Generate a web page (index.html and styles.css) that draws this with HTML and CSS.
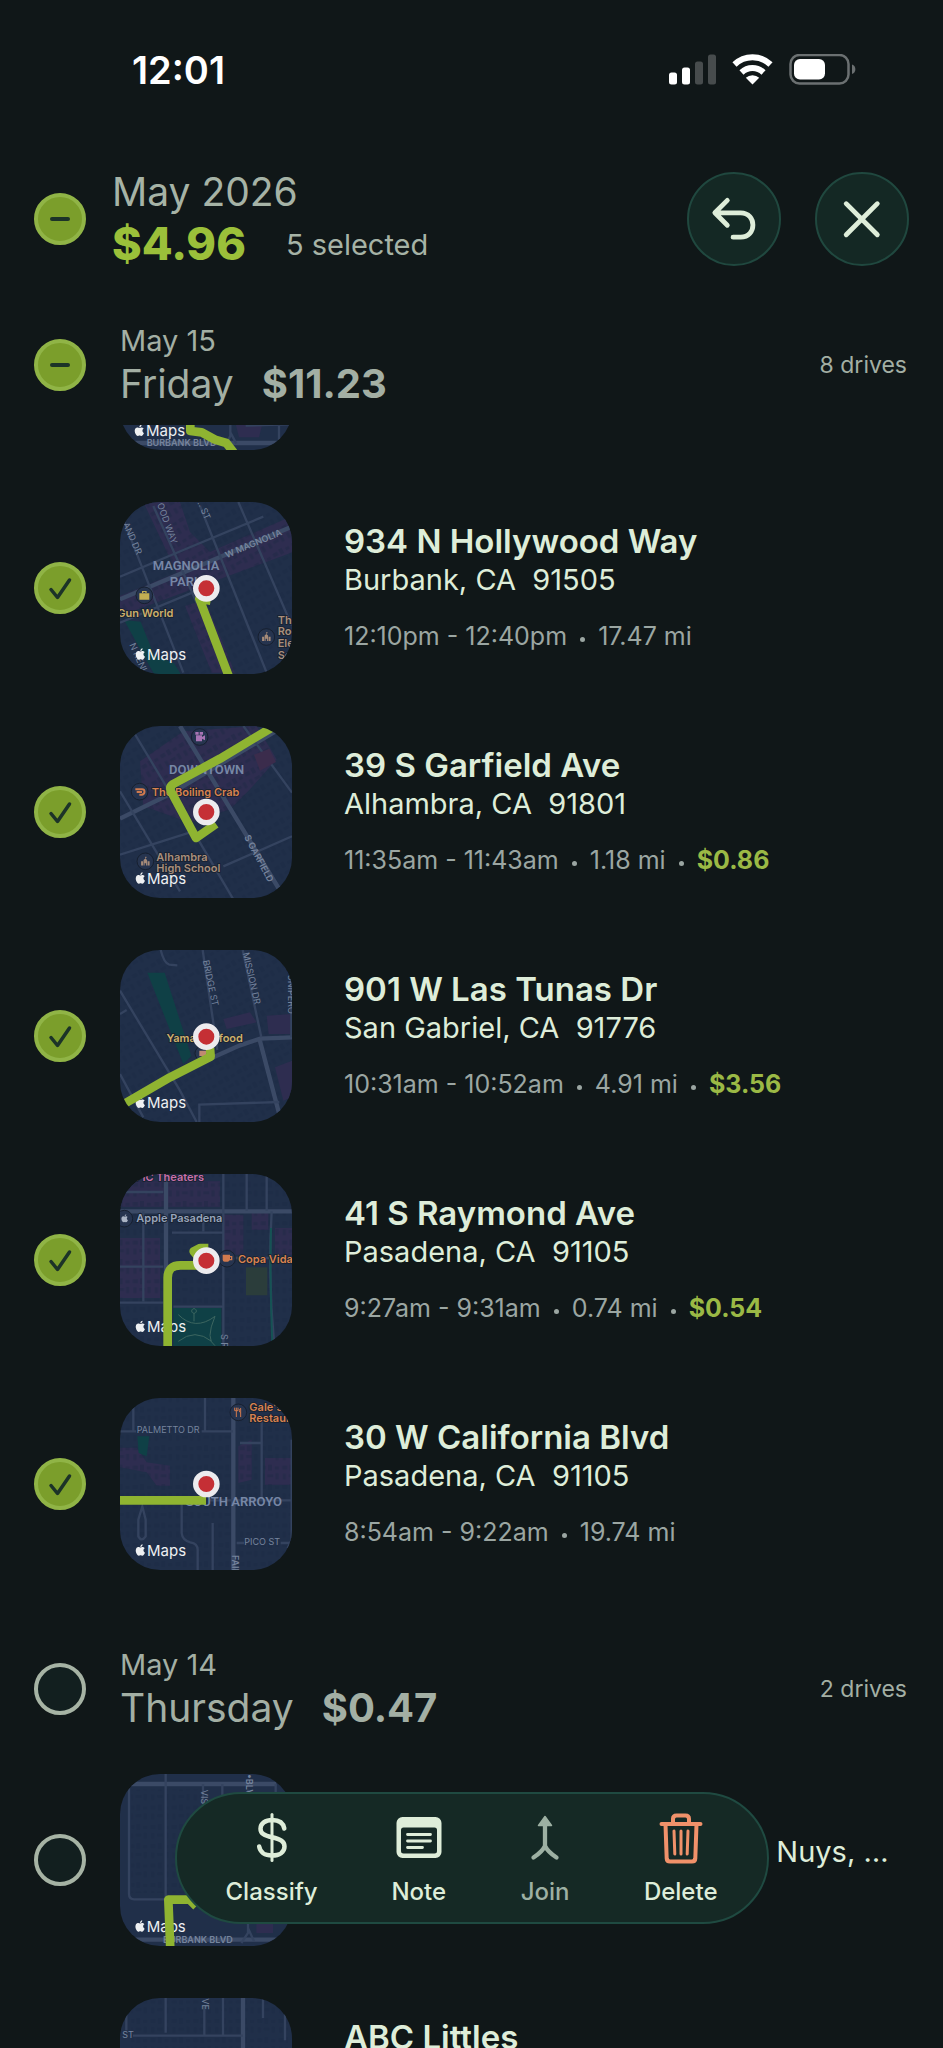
FILE: index.html
```html
<!DOCTYPE html>
<html lang="en">
<head>
<meta charset="utf-8">
<meta name="viewport" content="width=device-width, initial-scale=1">
<title>Drives</title>
<link rel="stylesheet" href="styles.css">
</head>
<body>
<svg class="defs" width="0" height="0" aria-hidden="true">
  <defs>
    <pattern id="blocks" width="64" height="58" patternUnits="userSpaceOnUse">
      <path class="bld" d="M4 6h16v12H4zM26 3h12v18H26zM46 8h13v10H46zM6 30h10v18H6zM24 32h18v9H24zM48 28h10v20H48z"/>
    </pattern>
    <pattern id="blocks-tilt" width="64" height="58" patternUnits="userSpaceOnUse" patternTransform="rotate(-30)">
      <path class="bld" d="M4 6h16v12H4zM26 3h12v18H26zM46 8h13v10H46zM6 30h10v18H6zM24 32h18v9H24zM48 28h10v20H48z"/>
    </pattern>
    <symbol id="apple" viewBox="0 0 24 24"><path d="M12.152 6.896c-.948 0-2.415-1.078-3.96-1.04-2.04.027-3.91 1.183-4.961 3.014-2.117 3.675-.546 9.103 1.519 12.09 1.013 1.454 2.208 3.09 3.792 3.039 1.52-.065 2.09-.987 3.935-.987 1.831 0 2.35.987 3.96.948 1.637-.026 2.676-1.48 3.676-2.948 1.156-1.688 1.636-3.325 1.662-3.415-.039-.013-3.182-1.221-3.22-4.857-.026-3.04 2.48-4.494 2.597-4.559-1.429-2.09-3.623-2.324-4.39-2.376-2-.156-3.675 1.09-4.61 1.09zM15.53 3.83c.843-1.012 1.4-2.427 1.245-3.83-1.207.052-2.662.805-3.532 1.818-.78.896-1.454 2.338-1.273 3.714 1.338.104 2.715-.688 3.559-1.701"/></symbol>
    <symbol id="school" viewBox="0 0 40 40"><path d="M3 37V20h8v17zM29 37V20h8v17zM13 37V15l7-6 7 6v22h-4v-9h-6v9zM19 2h6v4h-4v4h-2z"/></symbol>
    <symbol id="tick" viewBox="0 0 52 52"><path d="M17 27.500l6.500 8L35.500 18" fill="none" stroke="currentColor" stroke-width="3.500" stroke-linecap="round" stroke-linejoin="round"/></symbol>
    <symbol id="dash" viewBox="0 0 52 52"><path d="M18 26h16" fill="none" stroke="currentColor" stroke-width="4" stroke-linecap="round"/></symbol>
  </defs>
</svg>

<div class="app">
  <div class="status">
    <span class="clock">12:01</span>
    <svg class="status-icons" viewBox="0 0 188 32" width="188" height="32" aria-hidden="true">
      <g fill="#fff"><rect x="0" y="18.500" width="8" height="12" rx="2.500"/><rect x="13" y="13.500" width="8" height="17" rx="2.500"/></g>
      <g fill="#474c4d"><rect x="26" y="7.500" width="8" height="23" rx="2.500"/><rect x="39" y="0.500" width="8" height="30" rx="2.500"/></g>
      <g fill="none" stroke="#fff" stroke-width="6"><path d="M65.500 10.500a26 26 0 0 1 36 0"/><path d="M72.500 18.500a16 16 0 0 1 22 0"/></g>
      <path fill="#fff" d="M76.800 23.800a10 10 0 0 1 13.400 0l-6.700 6.700z"/>
      <rect x="121.500" y="1" width="58" height="28.500" rx="9" fill="none" stroke="#6b7071" stroke-width="2.500"/>
      <rect x="125" y="5" width="31" height="20.500" rx="6" fill="#fff"/>
      <path fill="#6b7071" d="M183 10.500c4.500 1 4.500 8.500 0 9.500z"/>
    </svg>
  </div>

  <header class="top">
    <label class="check"><input type="checkbox" checked aria-label="Select all drives in May 2026"><svg aria-hidden="true"><use href="#dash"/></svg></label>
    <div class="period">
      <h1 class="month">May 2026</h1>
      <p class="summary"><strong class="total">$4.96</strong><span class="count">5 selected</span></p>
    </div>
    <div class="actions">
      <button class="round" type="button" aria-label="Undo"><svg viewBox="0 0 94 94" fill="none" stroke="currentColor" stroke-width="5" stroke-linecap="round" stroke-linejoin="round"><path d="M40 27.500L27 40.500l13 13M28 40.500h26c17 0 17 25.500 0 25.500h-8"/></svg></button>
      <button class="round" type="button" aria-label="Close"><svg viewBox="0 0 94 94" fill="none" stroke="currentColor" stroke-width="5" stroke-linecap="round"><path d="M30.500 31l32.500 32.500M63 31L30.500 63.500"/></svg></button>
    </div>
  </header>

  <section class="day">
    <label class="check"><input type="checkbox" checked aria-label="Select drives on May 15"><svg aria-hidden="true"><use href="#dash"/></svg></label>
    <div class="day-text">
      <p class="date">May 15</p>
      <h2 class="weekday">Friday <strong>$11.23</strong></h2>
    </div>
    <span class="drives">8 drives</span>
  </section>

  <main class="scroll">
    <ul class="list list-cut">
      <li class="drive">
        <svg class="map" viewBox="363 -33 516 516" aria-hidden="true">
          <rect class="land" x="363" y="-33" width="516" height="516"/>
          <path class="zone" d="M710 405h80l-10 40h-60z"/>
          <path class="road wide" d="M363 462h516"/>
          <path class="road" d="M694 380v60l-14 30M694 430l18 34M840 380v80M740 410l130-4"/>
          <g class="brand"><use href="#apple" x="404" y="405" width="34" height="38"/><text x="441" y="442">Maps</text></g>
          <text class="street strong" x="443" y="471">BURBANK BLVD</text>
          <path class="route" d="M574 380v46l34 4 40 22 34 10 22 28"/>
        </svg>
      </li>

      <li class="drive">
        <label class="check"><input type="checkbox" checked aria-label="Select 934 N Hollywood Way"><svg aria-hidden="true"><use href="#tick"/></svg></label>
        <svg class="map" viewBox="30 38 516 516" aria-hidden="true">
          <rect class="land" x="30" y="38" width="516" height="516"/>
          <path class="zone" d="M100 38h110l30 90 60 60 250-110v110L30 380v-60l170-70zM225 350l60-20 90 220h-70z"/>
          <rect fill="url(#blocks-tilt)" x="30" y="38" width="516" height="516"/>
          <path class="park" d="M42 392l50 5 40 100 60 25 20 32h-80z"/>
          <path class="road wide" d="M30 330l520-220"/>
          <path class="road" d="M30 262l190-80 240-100M270 50l200 500M385 38l160 370M130 50l130 290M40 90l180 460M30 480l30 74M30 400l240-100"/>
          <g class="street"><text transform="translate(141 45) rotate(70)">OOD WAY</text><text transform="translate(262 40) rotate(66)">.. ST</text><text transform="translate(38 104) rotate(66)">AND DR</text><text transform="translate(58 466) rotate(66)">N KENI</text><text class="strong" transform="translate(350 207) rotate(-23)">W MAGNOLIA</text></g>
          <text class="place" x="228" y="243" text-anchor="middle">MAGNOLIA</text><text class="place" x="228" y="290" text-anchor="middle">PARK</text>
          <circle class="poi-bg" cx="103" cy="318" r="25"/><path fill="#c3ae52" d="M88 312h30v19H88zM96 311v-6h14v6h-4v-3h-6v3z"/>
          <text class="poi gold" x="22" y="383">Gun World</text>
          <circle class="poi-bg" cx="469" cy="443" r="25"/><use href="#school" x="453" y="427" width="32" height="30" fill="#a58a78"/>
          <g class="poi tan"><text x="503" y="403">The</text><text x="503" y="438">Roos</text><text x="503" y="473">Elem</text><text x="503" y="508">Sch</text></g>
          <g class="brand"><use href="#apple" x="74" y="474" width="34" height="40"/><text x="111" y="512">Maps</text></g>
          <path class="route" d="M302 334l-34-6 88 232"/>
          <circle class="pin" cx="289" cy="297" r="32"/>
        </svg>
        <div class="info">
          <h3 class="title">934 N Hollywood Way</h3>
          <p class="city">Burbank, CA&nbsp; 91505</p>
          <p class="meta">12:10pm - 12:40pm <i></i> 17.47 mi</p>
        </div>
      </li>

      <li class="drive">
        <label class="check"><input type="checkbox" checked aria-label="Select 39 S Garfield Ave"><svg aria-hidden="true"><use href="#tick"/></svg></label>
        <svg class="map" viewBox="30 34 516 516" aria-hidden="true">
          <rect class="land" x="30" y="34" width="516" height="516"/>
          <path class="zone" d="M90 140l130-90 220-16 60 100-80 90-60 60-120 40-140-50z"/>
          <rect fill="url(#blocks-tilt)" x="30" y="34" width="516" height="516"/>
          <path class="road wide" d="M30 312l150-74 320-190M210 34l310 510"/>
          <path class="road" d="M60 34l210 350 100 170M30 230l180 300M400 34l146 200M340 455l206-90M30 420l220-70"/>
          <path fill="#3b2c4c" d="M432 120l46-18 20 40-48 26z"/>
          <text class="place" x="290" y="179" text-anchor="middle">DOWNTOWN</text>
          <g class="street"><text class="strong" transform="translate(402 367) rotate(62)">S GARFIELD</text></g>
          <circle class="poi-bg" cx="269" cy="67" r="25"/><path fill="#a874b4" d="M258 62h18v5l9-5v15l-9-5v8h-18zM256 52h10v8h-10zM269 52h10v8h-10z"/>
          <circle class="poi-bg" cx="89" cy="231" r="25"/><path fill="none" stroke="#d07a4e" stroke-width="6" d="M76 224h20c10 0 10 14 0 16h-8M80 232h16"/>
          <text class="poi orange" x="125" y="245">The Boiling Crab</text>
          <circle class="poi-bg" cx="106" cy="440" r="25"/><use href="#school" x="90" y="425" width="32" height="30" fill="#a58a78"/>
          <g class="poi tan"><text x="139" y="438">Alhambra</text><text x="139" y="473">High School</text></g>
          <g class="brand"><use href="#apple" x="74" y="470" width="34" height="40"/><text x="111" y="508">Maps</text></g>
          <path class="route" d="M500 30L330 132 190 208q-14 9-6 24l74 138 60-42"/>
          <circle class="pin" cx="289" cy="292" r="32"/>
        </svg>
        <div class="info">
          <h3 class="title">39 S Garfield Ave</h3>
          <p class="city">Alhambra, CA&nbsp; 91801</p>
          <p class="meta">11:35am - 11:43am <i></i> 1.18 mi <i></i> <b>$0.86</b></p>
        </div>
      </li>

      <li class="drive">
        <label class="check"><input type="checkbox" checked aria-label="Select 901 W Las Tunas Dr"><svg aria-hidden="true"><use href="#tick"/></svg></label>
        <svg class="map" viewBox="30 28 516 516" aria-hidden="true">
          <rect class="land" x="30" y="28" width="516" height="516"/>
          <rect fill="url(#blocks-tilt)" x="30" y="28" width="516" height="516"/>
          <path class="zone" d="M340 235l80-20 20 30-90 20zM470 225l76-5v60h-70zM495 380l51-20v110l-26 10z"/>
          <path class="park" d="M112 96h52l80 250-24 24z"/>
          <path class="road wide" d="M300 354l90-40 60-20 96-4M448 294l66 250"/>
          <path class="road" d="M278 28l44 300M398 28l56 262M544 100v190M152 28q10 40 26 44l24 2M30 150l180 300 50 94M30 400l70 130M30 220l20-12M268 544v-52l240-8"/>
          <g class="street"><text transform="translate(278 60) rotate(78)">BRIDGE ST</text><text transform="translate(398 38) rotate(77)">MISSION DR</text><text transform="translate(535 85) rotate(90)">JUNIPERO</text></g>
          <text class="poi gold" x="284" y="304" text-anchor="middle">Yama Seafood</text>
          <circle class="poi-bg" cx="277" cy="338" r="22"/><path fill="#c08a72" d="M268 330h20v16h-20z"/>
          <g class="brand"><use href="#apple" x="74" y="465" width="34" height="40"/><text x="111" y="503">Maps</text></g>
          <path class="route" d="M42 490l138-80 122-62-2-26"/>
          <circle class="pin" cx="289" cy="288" r="32"/>
        </svg>
        <div class="info">
          <h3 class="title">901 W Las Tunas Dr</h3>
          <p class="city">San Gabriel, CA&nbsp; 91776</p>
          <p class="meta">10:31am - 10:52am <i></i> 4.91 mi <i></i> <b>$3.56</b></p>
        </div>
      </li>

      <li class="drive">
        <label class="check"><input type="checkbox" checked aria-label="Select 41 S Raymond Ave"><svg aria-hidden="true"><use href="#tick"/></svg></label>
        <svg class="map" viewBox="30 38 516 516" aria-hidden="true">
          <rect class="land" x="30" y="38" width="516" height="516"/>
          <path class="zone" d="M30 60h300v76H30zM30 230h120v180H30zM340 160h60v120h-60zM425 155h50v50h-50zM495 200h51v80h-51z"/>
          <rect fill="url(#blocks)" x="30" y="38" width="516" height="516"/>
          <path fill="#2b3d3b" d="M408 318h64v84h-64z"/>
          <path class="park" d="M190 440h144v114H190z"/>
          <path d="M205 460q50 50 110 5-30 70 0 88M205 540q50-40 100 0M252 480v-24a7 7 0 1 1 .1 0" fill="none" stroke="#3d6660" stroke-width="3"/>
          <path class="road wide" d="M30 150h516M168 38v516"/>
          <path class="road" d="M340 38v516M485 150q-12 200 8 404M30 316h130M186 214h156M30 424h130M340 290h206M190 436h150M100 150v270M410 38v110M470 38v110M30 92h130M280 150v60"/>
          <path d="M483 200q-4 140 4 350" stroke="#155354" stroke-width="6" fill="none"/>
          <g class="street"><text transform="translate(333 518) rotate(90)">S RAY</text></g>
          <text class="poi pink" x="76" y="60">PIC Theaters</text>
          <circle class="poi-bg" cx="43" cy="172" r="25"/><use href="#apple" x="32" y="158" width="24" height="26" fill="#a9b3c4"/>
          <text class="poi slate" x="79" y="183">Apple Pasadena</text>
          <circle class="poi-bg" cx="351" cy="292" r="25"/><path fill="#d07a4e" d="M338 280h22v4h7v13h-8q-2 4-6 4h-9q-6 0-6-6zM360 288v5h3v-5z"/>
          <text class="poi orange" x="384" y="304">Copa Vida</text>
          <g class="brand"><use href="#apple" x="74" y="475" width="34" height="40"/><text x="111" y="513">Maps</text></g>
          <path class="route" d="M173 560V350q0-38 38-38h76l-36-42 20-10h24"/>
          <circle class="pin" cx="289" cy="298" r="32"/>
        </svg>
        <div class="info">
          <h3 class="title">41 S Raymond Ave</h3>
          <p class="city">Pasadena, CA&nbsp; 91105</p>
          <p class="meta">9:27am - 9:31am <i></i> 0.74 mi <i></i> <b>$0.54</b></p>
        </div>
      </li>

      <li class="drive">
        <label class="check"><input type="checkbox" checked aria-label="Select 30 W California Blvd"><svg aria-hidden="true"><use href="#tick"/></svg></label>
        <svg class="map" viewBox="30 35 516 516" aria-hidden="true">
          <rect class="land" x="30" y="35" width="516" height="516"/>
          <path class="zone" d="M30 184h50l30 44 70 10v60h-40l-30-40-80-15zM385 180l40-20v120l-40 10zM465 215h81v80h-81z"/>
          <rect fill="url(#blocks)" x="30" y="35" width="516" height="516"/>
          <path class="park" d="M82 150h36l-8 60-24-10z"/>
          <path class="road wide" d="M370 35v516"/>
          <path class="road" d="M30 135h48M275 135h94M285 35v100M70 35v98M455 100v240M545 160v300l-12 26M300 342h246M380 470h22M512 470h30M215 350v90q2 22 26 28 22 4 22 22v61M308 410v141M97 360l-12 40v50q10 18 22 0v-50zM390 170h64"/>
          <g class="street"><text x="80" y="141">PALMETTO DR</text><text x="403" y="476">PICO ST</text><text class="strong" transform="translate(367 506) rotate(90)">FAIR</text></g>
          <text class="place" x="371" y="358" text-anchor="middle">SOUTH ARROYO</text>
          <circle class="poi-bg" cx="385" cy="78" r="25"/><path d="M379 64v28M374 64v9h10v-9M392 92V66c-5 2-5 12 0 14" fill="none" stroke="#d07a4e" stroke-width="3"/>
          <g class="poi orange"><text x="418" y="73">Gale's</text><text x="418" y="107">Restaurant</text></g>
          <g class="brand"><use href="#apple" x="74" y="471" width="34" height="40"/><text x="111" y="509">Maps</text></g>
          <path class="route" d="M20 342h268"/>
          <circle class="pin" cx="289" cy="293" r="32"/>
        </svg>
        <div class="info">
          <h3 class="title">30 W California Blvd</h3>
          <p class="city">Pasadena, CA&nbsp; 91105</p>
          <p class="meta">8:54am - 9:22am <i></i> 19.74 mi</p>
        </div>
      </li>
    </ul>

    <section class="day day-next">
      <label class="check"><input type="checkbox" aria-label="Select drives on May 14"><svg aria-hidden="true"><use href="#tick"/></svg></label>
      <div class="day-text">
        <p class="date">May 14</p>
        <h2 class="weekday">Thursday <strong>$0.47</strong></h2>
      </div>
      <span class="drives">2 drives</span>
    </section>

    <ul class="list">
      <li class="drive">
        <label class="check"><input type="checkbox" aria-label="Select Burbank Blvd drive"><svg aria-hidden="true"><use href="#tick"/></svg></label>
        <svg class="map" viewBox="361 433 516 516" aria-hidden="true">
          <rect class="land" x="361" y="433" width="516" height="516"/>
          <rect fill="url(#blocks)" x="395" y="480" width="220" height="310"/>
          <path class="zone" d="M770 880h50v30h-50z"/>
          <path class="road wide" d="M390 463h440M361 930h516"/>
          <path class="road" d="M388 463v330q0 16 16 16h92M498 433v370M610 463v60M668 463v60M745 480v430l-20 30M745 895l18 40M828 463v40"/>
          <g class="street"><text class="strong" transform="translate(738 434) rotate(90)">&#8226;BLVD</text><text transform="translate(605 480) rotate(90)">VISTA</text></g>
          <g class="brand"><use href="#apple" x="404" y="870" width="34" height="38"/><text x="441" y="907">Maps</text></g>
          <text class="street strong" x="490" y="939">BURBANK BLVD</text>
          <path class="route" d="M512 960l-6-150h64l20 20"/>
        </svg>
        <div class="info">
          <h3 class="title">Burbank Blvd</h3>
          <p class="city">Burbank Blvd &amp; Kester Ave Van Nuys, CA&nbsp; 91411</p>
          <p class="meta">5:12pm - 5:20pm <i></i> 1.04 mi</p>
        </div>
      </li>
      <li class="drive">
        <svg class="map" viewBox="361 1103 516 516" aria-hidden="true">
          <rect class="land" x="361" y="1103" width="516" height="516"/>
          <rect fill="url(#blocks)" x="395" y="1110" width="470" height="480"/>
          <path class="road wide" d="M730 1103v516"/>
          <path class="road" d="M400 1216h330M498 1103v104M614 1130v86M670 1103v110M380 1140v60M856 1150v80M790 1103v60"/>
          <g class="street"><text x="368" y="1223">ST</text><text transform="translate(608 1104) rotate(90)">VE</text></g>
        </svg>
        <div class="info">
          <h3 class="title">ABC Littles</h3>
          <p class="city">&nbsp;</p>
          <p class="meta">&nbsp;</p>
        </div>
      </li>
    </ul>
  </main>

  <nav class="toolbar" aria-label="Selection actions">
    <button class="tool" type="button">
      <svg viewBox="0 0 50 50" fill="none" stroke="currentColor" stroke-linecap="round"><path stroke-width="4.500" d="M37.300 16.500c-1-5.500-5.500-8.500-12-8.500-7 0-11.800 3.400-11.800 8.700 0 5 4 6.900 11.500 8.600 8.300 1.900 12.500 4 12.500 9.200 0 5.500-5 9-12.500 9-7.200 0-12-3.300-12.800-9"/><path stroke-width="3" d="M25 2.500v46"/></svg>
      <span>Classify</span>
    </button>
    <button class="tool" type="button">
      <svg viewBox="0 0 50 50"><path fill="currentColor" fill-rule="evenodd" d="M8.500 5h33A6 6 0 0 1 47.500 11v29a6 6 0 0 1-6 6h-33a6 6 0 0 1-6-6V11a6 6 0 0 1 6-6zM9.500 15.500a2.500 2.500 0 0 0-2.500 2.500v21a2.500 2.500 0 0 0 2.500 2.500h31a2.500 2.500 0 0 0 2.500-2.500V18a2.500 2.500 0 0 0-2.500-2.500z"/><path d="M13.500 22.500h23M13.500 29h23M13.500 35.500h15" fill="none" stroke="currentColor" stroke-width="2.800" stroke-linecap="round"/></svg>
      <span>Note</span>
    </button>
    <button class="tool" type="button" disabled>
      <svg viewBox="0 0 50 50" fill="none" stroke="currentColor" stroke-width="4.300" stroke-linecap="round"><path d="M25 12v22q-3 6-11.500 11.500M25 34q3 6 11.500 11.500"/><path fill="currentColor" stroke-width="1.500" stroke-linejoin="round" d="M25 4.500l6.500 9h-13z"/></svg>
      <span>Join</span>
    </button>
    <button class="tool danger" type="button">
      <svg viewBox="0 0 50 50" fill="none" stroke="currentColor" stroke-width="4" stroke-linecap="round" stroke-linejoin="round"><path d="M5.500 12h39M17 11V7q0-3.500 3.500-3.500h9Q33 3.500 33 7v4M9.500 12.500l1.200 34q.2 3 3.300 3h22q3.100 0 3.300-3l1.200-34"/><path stroke-width="3" d="M18 19l.800 23M25 19v23M32 19l-.800 23"/></svg>
      <span>Delete</span>
    </button>
  </nav>
</div>
</body>
</html>
```

FILE: styles.css
```css
* { box-sizing: border-box; }

body, h1, h2, h3, p, ul { margin: 0; padding: 0; }

body {
  background: #101718;
  color: #deedd9;
  font-family: Inter, "Liberation Sans", sans-serif;
}

.defs { position: absolute; }

.app {
  position: relative;
  display: flex;
  flex-direction: column;
  height: 100vh;
  overflow: hidden;
}

/* Status bar */
.status {
  display: flex;
  align-items: center;
  justify-content: space-between;
  flex: none;
  height: 140px;
  padding: 0 86px 0 132px;
  color: #fff;
}
.clock { font-size: 38px; font-weight: 600; line-height: 40px; }

/* Header */
.top {
  display: flex;
  align-items: center;
  flex: none;
  padding: 27px 34px 34px;
  color: #a6b3a6;
}
.period { flex: 1; margin-left: 26px; }
.month { font-size: 39px; font-weight: 400; line-height: 50px; }
.summary { display: flex; align-items: center; gap: 40px; }
.total { color: #9bc03a; font-size: 45px; font-weight: 800; line-height: 54px; }
.count { font-size: 29px; font-weight: 400; }
.actions { display: flex; gap: 34px; }
.round {
  width: 94px;
  height: 94px;
  padding: 0;
  border: 2px solid #20483f;
  border-radius: 50%;
  background: #142824;
  color: #deedd9;
}
.round svg { display: block; width: 100%; height: 100%; }

/* Selection circles */
.check {
  display: grid;
  flex: none;
  width: 52px;
  height: 52px;
  color: #1c3328;
}
.check > * { grid-area: 1 / 1; width: 52px; height: 52px; }
.check input {
  margin: 0;
  border: 4px solid #a6b3a4;
  border-radius: 50%;
  background: #121f1f;
  appearance: none;
}
.check input:checked { border-color: #90b446; background: #7b9e2b; }
.check svg { visibility: hidden; pointer-events: none; }
.check input:checked + svg { visibility: visible; }

/* Day headings */
.day {
  display: flex;
  align-items: center;
  flex: none;
  height: 120px;
  padding: 0 36px 0 34px;
  color: #a3afa4;
}
.day-next { margin: 59px 0 25px; }
.day-text { flex: 1; margin-left: 34px; }
.date { font-size: 29px; font-weight: 400; line-height: 38px; }
.weekday { display: flex; gap: 28px; font-size: 39px; font-weight: 400; line-height: 48px; }
.weekday strong { font-size: 40px; font-weight: 700; }
.drives { font-size: 23px; }

/* Drive list */
.scroll { flex: 1; min-height: 0; overflow: hidden; }
.list { display: grid; gap: 52px; list-style: none; }
.list-cut { margin-top: -147px; }
.drive {
  display: grid;
  grid-template-columns: 52px 172px minmax(0, 1fr);
  align-items: center;
  padding: 0 52px 0 34px;
  column-gap: 34px;
}
.map {
  grid-column: 2;
  display: block;
  width: 172px;
  height: 172px;
  border-radius: 40px;
}
.info { margin-left: 18px; }
.title { font-size: 33px; font-weight: 600; line-height: 40px; white-space: nowrap; }
.city {
  overflow: hidden;
  font-size: 29px;
  line-height: 38px;
  text-overflow: ellipsis;
  white-space: nowrap;
}
.meta { margin-top: 18px; color: #9ba6a2; font-size: 25px; line-height: 38px; white-space: nowrap; }
.meta i {
  display: inline-block;
  width: 5px;
  height: 5px;
  margin: 0 6px 3px;
  border-radius: 50%;
  background: currentColor;
}
.meta b { color: #9bb945; font-weight: 700; }

/* Map tiles */
.land { fill: #202f49; }
.bld { fill: #1a2742; opacity: 0.35; }
.zone { fill: #2e2d50; }
.park { fill: #0f4046; }
.road { fill: none; stroke: #34435f; stroke-width: 7; }
.road.wide { stroke: #3b4a66; stroke-width: 13; }
.street { fill: #76849d; font-size: 27px; }
.strong { font-weight: 600; }
.place { fill: #7787a6; font-family: Roboto, sans-serif; font-size: 39px; font-weight: 600; }
.poi { font-size: 33px; font-weight: 600; paint-order: stroke; stroke: #17202f; stroke-width: 5; }
.poi-bg { fill: #26344f; stroke: #17202f; stroke-width: 3; }
.gold { fill: #cdb06c; }
.orange { fill: #d98350; }
.tan { fill: #a98f7c; }
.pink { fill: #c870a8; }
.slate { fill: #97a4ba; }
.brand { fill: #eef0f2; font-size: 45px; }
.route { fill: none; stroke: #8fb431; stroke-width: 26; stroke-linejoin: round; }
.pin { fill: #c52f35; stroke: #ecebee; stroke-width: 16; }

/* Floating actions */
.toolbar {
  position: absolute;
  bottom: 124px;
  left: 50%;
  display: flex;
  justify-content: space-between;
  width: 594px;
  height: 132px;
  padding: 17px 49px 0;
  border: 2px solid #1f4a41;
  border-radius: 66px;
  background: #152925;
  transform: translateX(-50%);
}
.tool {
  display: flex;
  flex-direction: column;
  align-items: center;
  gap: 13px;
  padding: 0;
  border: 0;
  background: none;
  color: #deedd9;
  font: 500 24px/32px Inter, "Liberation Sans", sans-serif;
}
.tool svg { width: 50px; height: 52px; overflow: visible; }
.tool:disabled { color: #9db0a3; }
.danger svg { color: #f0916a; }
```
